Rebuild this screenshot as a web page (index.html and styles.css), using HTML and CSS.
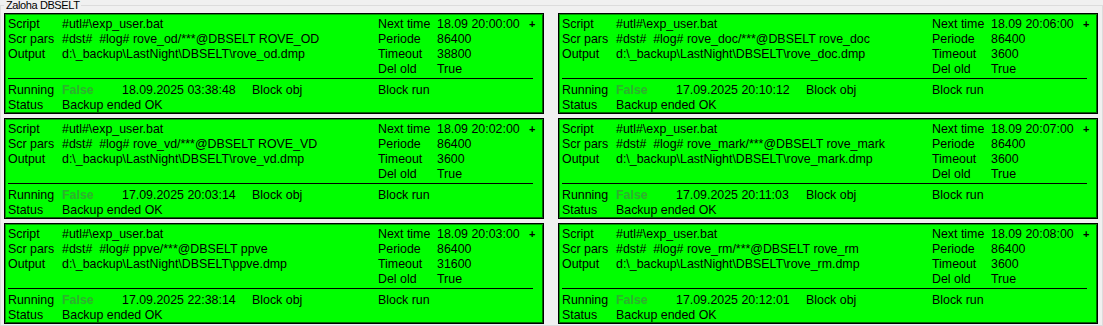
FILE: index.html
```html
<!DOCTYPE html>
<html lang="en">
<head>
  <meta charset="UTF-8" />
  <meta name="viewport" content="width=device-width, initial-scale=1.0" />
  <title>Zaloha DBSELT</title>
  <link rel="stylesheet" href="styles.css">
</head>
<body>
  <fieldset class="group">
    <legend>Zaloha DBSELT</legend>

    <div class="tasks">

      <div class="task">
        <div class="task-top">
          <span class="label">Script</span><span>#utl#\exp_user.bat</span>
          <span class="right-label">Next time</span><span>18.09 20:00:00</span><span class="plus">+</span>
          <span class="label">Scr pars</span><span>#dst#  #log# rove_od/***@DBSELT ROVE_OD</span>
          <span class="right-label">Periode</span><span>86400</span>
          <span class="label">Output</span><span>d:\_backup\LastNight\DBSELT\rove_od.dmp</span>
          <span class="right-label">Timeout</span><span>38800</span>
          <span class="right-label">Del old</span><span>True</span>
        </div>
        <div class="rule"></div>
        <div class="task-bottom">
          <span class="label">Running</span><span class="off">False</span><span>18.09.2025 03:38:48</span><span>Block obj</span><span>Block run</span>
          <span class="label">Status</span><span class="status">Backup ended OK</span>
        </div>
      </div>

      <div class="task">
        <div class="task-top">
          <span class="label">Script</span><span>#utl#\exp_user.bat</span>
          <span class="right-label">Next time</span><span>18.09 20:06:00</span><span class="plus">+</span>
          <span class="label">Scr pars</span><span>#dst#  #log# rove_doc/***@DBSELT rove_doc</span>
          <span class="right-label">Periode</span><span>86400</span>
          <span class="label">Output</span><span>d:\_backup\LastNight\DBSELT\rove_doc.dmp</span>
          <span class="right-label">Timeout</span><span>3600</span>
          <span class="right-label">Del old</span><span>True</span>
        </div>
        <div class="rule"></div>
        <div class="task-bottom">
          <span class="label">Running</span><span class="off">False</span><span>17.09.2025 20:10:12</span><span>Block obj</span><span>Block run</span>
          <span class="label">Status</span><span class="status">Backup ended OK</span>
        </div>
      </div>

      <div class="task">
        <div class="task-top">
          <span class="label">Script</span><span>#utl#\exp_user.bat</span>
          <span class="right-label">Next time</span><span>18.09 20:02:00</span><span class="plus">+</span>
          <span class="label">Scr pars</span><span>#dst#  #log# rove_vd/***@DBSELT ROVE_VD</span>
          <span class="right-label">Periode</span><span>86400</span>
          <span class="label">Output</span><span>d:\_backup\LastNight\DBSELT\rove_vd.dmp</span>
          <span class="right-label">Timeout</span><span>3600</span>
          <span class="right-label">Del old</span><span>True</span>
        </div>
        <div class="rule"></div>
        <div class="task-bottom">
          <span class="label">Running</span><span class="off">False</span><span>17.09.2025 20:03:14</span><span>Block obj</span><span>Block run</span>
          <span class="label">Status</span><span class="status">Backup ended OK</span>
        </div>
      </div>

      <div class="task">
        <div class="task-top">
          <span class="label">Script</span><span>#utl#\exp_user.bat</span>
          <span class="right-label">Next time</span><span>18.09 20:07:00</span><span class="plus">+</span>
          <span class="label">Scr pars</span><span>#dst#  #log# rove_mark/***@DBSELT rove_mark</span>
          <span class="right-label">Periode</span><span>86400</span>
          <span class="label">Output</span><span>d:\_backup\LastNight\DBSELT\rove_mark.dmp</span>
          <span class="right-label">Timeout</span><span>3600</span>
          <span class="right-label">Del old</span><span>True</span>
        </div>
        <div class="rule"></div>
        <div class="task-bottom">
          <span class="label">Running</span><span class="off">False</span><span>17.09.2025 20:11:03</span><span>Block obj</span><span>Block run</span>
          <span class="label">Status</span><span class="status">Backup ended OK</span>
        </div>
      </div>

      <div class="task">
        <div class="task-top">
          <span class="label">Script</span><span>#utl#\exp_user.bat</span>
          <span class="right-label">Next time</span><span>18.09 20:03:00</span><span class="plus">+</span>
          <span class="label">Scr pars</span><span>#dst#  #log# ppve/***@DBSELT ppve</span>
          <span class="right-label">Periode</span><span>86400</span>
          <span class="label">Output</span><span>d:\_backup\LastNight\DBSELT\ppve.dmp</span>
          <span class="right-label">Timeout</span><span>31600</span>
          <span class="right-label">Del old</span><span>True</span>
        </div>
        <div class="rule"></div>
        <div class="task-bottom">
          <span class="label">Running</span><span class="off">False</span><span>17.09.2025 22:38:14</span><span>Block obj</span><span>Block run</span>
          <span class="label">Status</span><span class="status">Backup ended OK</span>
        </div>
      </div>

      <div class="task">
        <div class="task-top">
          <span class="label">Script</span><span>#utl#\exp_user.bat</span>
          <span class="right-label">Next time</span><span>18.09 20:08:00</span><span class="plus">+</span>
          <span class="label">Scr pars</span><span>#dst#  #log# rove_rm/***@DBSELT rove_rm</span>
          <span class="right-label">Periode</span><span>86400</span>
          <span class="label">Output</span><span>d:\_backup\LastNight\DBSELT\rove_rm.dmp</span>
          <span class="right-label">Timeout</span><span>3600</span>
          <span class="right-label">Del old</span><span>True</span>
        </div>
        <div class="rule"></div>
        <div class="task-bottom">
          <span class="label">Running</span><span class="off">False</span><span>17.09.2025 20:12:01</span><span>Block obj</span><span>Block run</span>
          <span class="label">Status</span><span class="status">Backup ended OK</span>
        </div>
      </div>

    </div>
  </fieldset>
</body>
</html>
```

FILE: styles.css
```css
body {
  margin: 0;
  background-color: #f0f0f0;
  font-family: "Liberation Sans", Arial, sans-serif;
  font-size: 12.4px;
  color: #000;
}

.group {
  margin: 0;
  padding: 3px 5px 0 3px;
  border: 1px solid #dcdcdc;
  min-width: 0;
  height: 326px;
  box-sizing: border-box;
}

.group legend {
  margin-left: 0;
  padding: 0 2px;
  font-size: 11px;
  line-height: 10px;
  letter-spacing: -0.4px;
}

.tasks {
  display: grid;
  grid-template-columns: 540px 540px;
  column-gap: 14px;
  row-gap: 4px;
}

.task {
  height: 101px;
  box-sizing: border-box;
  padding: 3px 0 0 3px;
  background-color: #00ff00;
  border: 1px solid #000;
  box-shadow: inset 1px 1px 0 #009900, inset -1px -1px 0 #006600;
  line-height: 15px;
}

.task span {
  white-space: pre;
}

.task-top {
  display: grid;
  grid-template-columns: 54px 316px 59px 92px auto;
  grid-auto-rows: 15px;
}

.task-bottom {
  display: grid;
  grid-template-columns: 54px 60px 130px 126px auto;
  grid-auto-rows: 15px;
}

.label {
  grid-column: 1;
}

.right-label {
  grid-column: 3;
}

.plus {
  font-weight: bold;
  font-size: 11px;
}

.status {
  grid-column: 2 / -1;
}

.off {
  color: #2fae2f;
  font-weight: bold;
}

.rule {
  height: 1px;
  margin: 1px 10px 4px 0;
  background-color: #000;
}
```
